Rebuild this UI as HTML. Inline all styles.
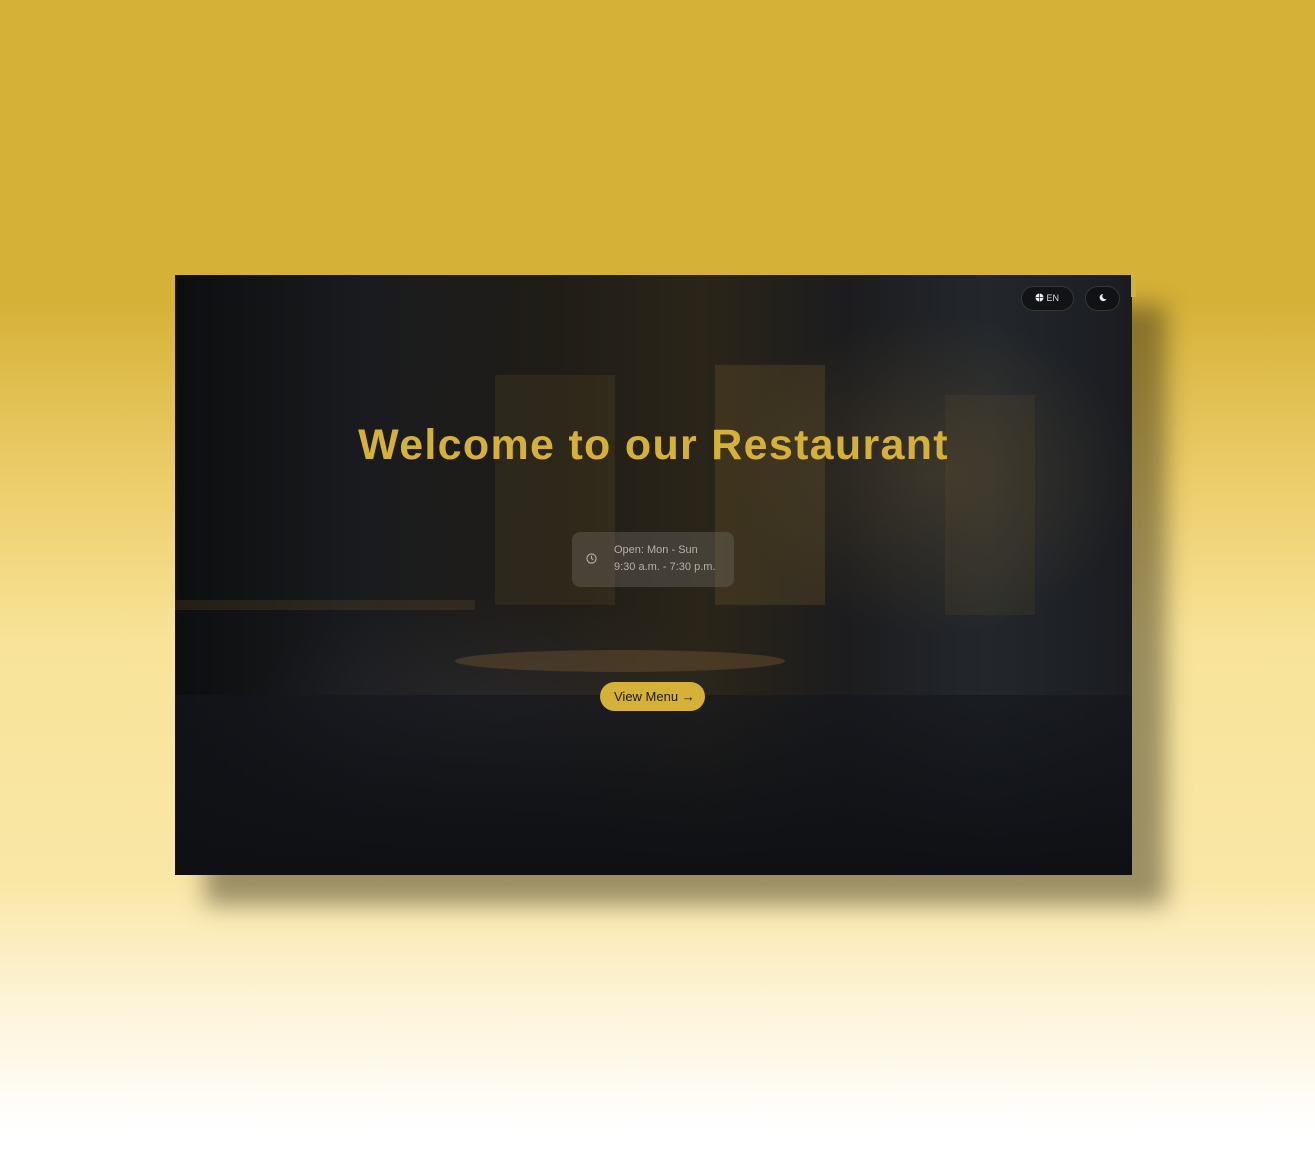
<!DOCTYPE html>
<html><head><meta charset="utf-8"><style>
*{margin:0;padding:0;box-sizing:border-box}
body{width:1315px;height:1151px;overflow:hidden;font-family:"Liberation Sans",sans-serif;
background:linear-gradient(180deg,#d6b138 0px,#d6b138 300px,#eccd6a 480px,#f8e398 640px,#fae7a6 880px,#fdf3d6 1000px,#ffffff 1130px);position:relative}
.shadow{position:absolute;left:205px;top:305px;width:961px;height:600px;background:rgba(40,35,20,.45);filter:blur(12px)}
.card{position:absolute;left:175px;top:275px;width:957px;height:600px;overflow:hidden;background:#121417}
.bg{position:absolute;inset:0;background:
radial-gradient(ellipse 200px 160px at 760px 200px,rgba(110,90,50,.35),transparent),
radial-gradient(ellipse 260px 120px at 330px 440px,rgba(60,60,70,.35),transparent),
linear-gradient(90deg,#0d0e10 0,#1a1b1e 20%,#201d17 40%,#2a2518 55%,#1c1c1e 70%,#23272c 85%,#1a1c20 100%)}
.stripe{position:absolute;background:rgba(140,110,50,.22)}
.floor{position:absolute;left:0;right:0;top:420px;bottom:0;background:linear-gradient(180deg,rgba(20,22,28,.6),#0e1014)}
h1{position:absolute;left:0;right:0;top:146px;text-align:center;color:#d6b138;font-size:43px;font-weight:bold;letter-spacing:1.3px}
.hours{position:absolute;left:397px;top:257px;width:162px;height:55px;border-radius:8px;background:rgba(110,105,100,.4);color:#b5b0a8;font-size:11px;line-height:17px;padding:10px 0 0 42px}
.hours svg{position:absolute;left:14px;top:21px}
.btn{position:absolute;left:425px;top:407px;width:105px;height:29px;border-radius:15px;background:#d6b138;color:#1d1a10;font-size:13px;line-height:29px;padding-left:14px}
.pill{position:absolute;top:11px;height:25px;border-radius:13px;background:rgba(15,16,18,.85);border:1px solid rgba(90,90,90,.5);color:#ddd;font-size:9px;line-height:23px}
</style></head><body>
<div class="shadow"></div>
<div class="card">
<div class="bg"></div>
<div class="stripe" style="left:320px;top:100px;width:120px;height:230px;opacity:.6"></div>
<div class="stripe" style="left:540px;top:90px;width:110px;height:240px"></div>
<div class="stripe" style="left:770px;top:120px;width:90px;height:220px;opacity:.5"></div>
<div class="stripe" style="left:0;top:325px;width:300px;height:10px;opacity:.8"></div>
<div class="floor"></div>
<div class="stripe" style="left:280px;top:375px;width:330px;height:22px;border-radius:50%;background:rgba(120,90,50,.4)"></div>
<h1>Welcome to our Restaurant</h1>
<div class="hours"><svg width="11" height="11" viewBox="0 0 12 12"><circle cx="6" cy="6" r="5" fill="none" stroke="#b5b0a8" stroke-width="1.2"/><path d="M6 3v3l2 1.3" fill="none" stroke="#b5b0a8" stroke-width="1.2"/></svg>Open: Mon - Sun<br>9:30 a.m. - 7:30 p.m.</div>
<div class="btn">View Menu <span style="font-weight:bold">→</span></div>
<div class="pill" style="left:846px;width:53px;padding-left:13px"><svg width="9" height="9" viewBox="0 0 10 10" style="vertical-align:-1px"><circle cx="5" cy="5" r="4.5" fill="#eee"/><path d="M0.5 5h9M5 .5v9" stroke="#222" stroke-width=".8"/></svg> EN</div>
<div class="pill" style="left:910px;width:35px;text-align:center"><svg width="9" height="9" viewBox="0 0 10 10" style="vertical-align:-1px"><path d="M6 1a4 4 0 1 0 3.5 5.5A3.3 3.3 0 0 1 6 1z" fill="#eee"/></svg></div>
</div>
<div style="position:absolute;left:1131px;top:275px;width:5px;height:22px;background:#d6b138"></div>
</body></html>
